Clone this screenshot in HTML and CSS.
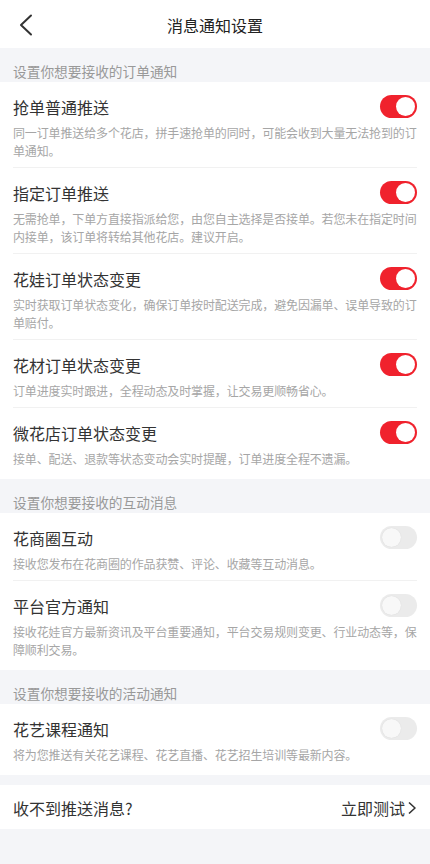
FILE: index.html
```html
<!DOCTYPE html>
<html lang="zh-CN">
<head>
    <meta charset="utf-8">
    <title>消息通知设置</title>
    <link rel="stylesheet" href="styles.css">
</head>
<body>
<div class="page">
<header class="topbar">
    <svg class="back" width="14" height="22" viewBox="0 0 14 22"><polyline points="12,1.5 2,11 12,20.5" fill="none" stroke="#333" stroke-width="2" stroke-linecap="round" stroke-linejoin="round"/></svg>
    <h1>消息通知设置</h1>
</header>

<div class="group-title">设置你想要接收的订单通知</div>
<ul class="list">
    <li class="item">
        <div class="row"><span class="name">抢单普通推送</span><span class="switch on"></span></div>
        <p class="desc">同一订单推送给多个花店，拼手速抢单的同时，可能会收到大量无法抢到的订单通知。</p>
    </li>
    <li class="item">
        <div class="row"><span class="name">指定订单推送</span><span class="switch on"></span></div>
        <p class="desc">无需抢单，下单方直接指派给您，由您自主选择是否接单。若您未在指定时间内接单，该订单将转给其他花店。建议开启。</p>
    </li>
    <li class="item">
        <div class="row"><span class="name">花娃订单状态变更</span><span class="switch on"></span></div>
        <p class="desc">实时获取订单状态变化，确保订单按时配送完成，避免因漏单、误单导致的订单赔付。</p>
    </li>
    <li class="item">
        <div class="row"><span class="name">花材订单状态变更</span><span class="switch on"></span></div>
        <p class="desc">订单进度实时跟进，全程动态及时掌握，让交易更顺畅省心。</p>
    </li>
    <li class="item">
        <div class="row"><span class="name">微花店订单状态变更</span><span class="switch on"></span></div>
        <p class="desc">接单、配送、退款等状态变动会实时提醒，订单进度全程不遗漏。</p>
    </li>
</ul>

<div class="group-title">设置你想要接收的互动消息</div>
<ul class="list">
    <li class="item">
        <div class="row"><span class="name">花商圈互动</span><span class="switch"></span></div>
        <p class="desc">接收您发布在花商圈的作品获赞、评论、收藏等互动消息。</p>
    </li>
    <li class="item">
        <div class="row"><span class="name">平台官方通知</span><span class="switch"></span></div>
        <p class="desc">接收花娃官方最新资讯及平台重要通知，平台交易规则变更、行业动态等，保障顺利交易。</p>
    </li>
</ul>

<div class="group-title">设置你想要接收的活动通知</div>
<ul class="list">
    <li class="item">
        <div class="row"><span class="name">花艺课程通知</span><span class="switch"></span></div>
        <p class="desc">将为您推送有关花艺课程、花艺直播、花艺招生培训等最新内容。</p>
    </li>
</ul>

<div class="test-row">
    <span>收不到推送消息?</span>
    <span class="test-link">立即测试<svg width="10" height="14" viewBox="0 0 10 14"><polyline points="2,1.5 8,7 2,12.5" fill="none" stroke="#333" stroke-width="1.6" stroke-linejoin="round"/></svg></span>
</div>
</div>
</body>
</html>
```

FILE: styles.css
```css
html, body { margin: 0; padding: 0; }
body {
    font-family: "Noto Sans CJK SC", "Noto Sans", sans-serif;
    background: #f4f5f8;
    color: #333;
}
.page { min-height: 864px; background: #f4f5f8; }

.topbar {
    height: 48px;
    background: #fff;
    display: flex;
    align-items: center;
    justify-content: center;
    position: relative;
}
.topbar h1 {
    margin: 0;
    font-size: 16px;
    font-weight: normal;
    color: #222;
    line-height: 22px;
    padding-top: 2px;
}
.back { position: absolute; left: 19px; top: 14px; }

.group-title {
    height: 34px;
    box-sizing: border-box;
    padding: 14px 13px 0;
    font-size: 13.7px;
    line-height: 18px;
    color: #999;
}

.list { list-style: none; margin: 0; padding: 0 13px; background: #fff; }
.item { padding: 14px 0 7px; border-bottom: 1px solid #f1f1f1; }
.item:last-child { border-bottom: none; padding-bottom: 11px; }

.row { display: flex; align-items: center; justify-content: space-between; height: 22px; }
.name { font-size: 16px; line-height: 22px; color: #333; }
.row .switch { margin-top: -1px; }

.desc {
    margin: 6px 0 0;
    font-size: 12px;
    letter-spacing: -0.13px;
    line-height: 18px;
    color: #a6a6a6;
}

.switch {
    width: 37px;
    height: 23px;
    border-radius: 12px;
    background: #ebebeb;
    position: relative;
    flex: none;
}
.switch::after {
    content: "";
    position: absolute;
    top: 2px;
    left: 2px;
    width: 19px;
    height: 19px;
    border-radius: 50%;
    background: #f8f8f8;
    box-shadow: 0 0 1px rgba(0,0,0,0.12);
}
.switch.on { background: #f0222d; }
.switch.on::after { left: 16px; background: #fff; box-shadow: none; }

.test-row {
    margin-top: 10px;
    height: 42px;
    background: #fff;
    display: flex;
    align-items: center;
    justify-content: space-between;
    padding: 2px 13px 0;
    font-size: 16px;
    color: #333;
}
.test-link { display: flex; align-items: center; gap: 2px; }
```
